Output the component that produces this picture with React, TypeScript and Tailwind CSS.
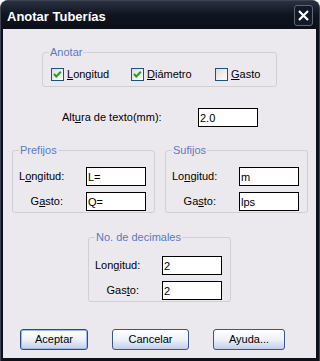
import type { ReactNode } from "react";

function Check({ checked }: { checked: boolean }) {
  return (
    <span className="w-[13px] h-[13px] border border-[#1c5180] bg-linear-to-br from-[#dcdcd7] to-white flex items-center justify-center shrink-0">
      {checked && (
        <svg width="11" height="11" viewBox="0 0 11 11">
          <path d="M2 5 L4.3 7.5 L8.8 2.8" fill="none" stroke="#21a121" strokeWidth="2" />
        </svg>
      )}
    </span>
  );
}

function Group({
  title,
  className = "",
  children,
}: {
  title: string;
  className?: string;
  children: ReactNode;
}) {
  return (
    <fieldset className={`border border-[#d0cfd4] rounded-[3px] pl-[6px] ${className}`}>
      <legend className="px-[1px] leading-[13px] text-[#5a78c4]">{title}</legend>
      {children}
    </fieldset>
  );
}

function Field({ label, value }: { label: ReactNode; value: string }) {
  return (
    <div className="flex items-center h-[19px]">
      <span className="w-[44px] text-right whitespace-nowrap">{label}</span>
      <input
        readOnly
        value={value}
        className="ml-[23px] w-[60px] h-[19px] border border-black bg-white px-[1px] text-[11px] outline-none"
      />
    </div>
  );
}

export default function App() {
  return (
    <div className="w-[320px] h-[361px] flex flex-col bg-[#0c111b] rounded-t-[8px] border-t border-x border-[#3c4352] font-['Liberation_Sans',Arial,sans-serif] text-[11px] text-black">
      {/* Title bar */}
      <div className="h-[28px] flex items-start justify-between pl-[6px] pr-[6px] rounded-t-[8px] bg-linear-to-b from-[#2a3141] via-[#0f1420] to-[#0b0f18]">
        <span className="mt-[8px] leading-[15px] text-[13px] font-bold text-white">Anotar Tuberías</span>
        <div className="mt-[4px] w-[19px] h-[21px] rounded-[3px] border border-[#5f6675] bg-[#131927] flex items-center justify-center">
          <svg width="11" height="11" viewBox="0 0 11 11">
            <path d="M1 1 L10 10 M10 1 L1 10" stroke="white" strokeWidth="2.2" />
          </svg>
        </div>
      </div>

      {/* Content */}
      <div className="flex-1 ml-[2px] mr-[3px] mb-[3px] bg-[#ece9ee] flex flex-col items-start">
        <Group title="Anotar" className="mt-[17px] ml-[39px] w-[235px] pt-[9px] pb-[5px]">
          <div className="flex items-center pl-[2px] h-[13px]">
            <div className="w-[80px] flex items-center gap-[3px]">
              <Check checked />
              <span>
                <u>L</u>ongitud
              </span>
            </div>
            <div className="w-[84px] flex items-center gap-[3px]">
              <Check checked />
              <span>
                <u>D</u>iámetro
              </span>
            </div>
            <div className="flex items-center gap-[3px]">
              <Check checked={false} />
              <span>
                <u>G</u>asto
              </span>
            </div>
          </div>
        </Group>

        <div className="mt-[21px] ml-[59px] flex items-center h-[19px]">
          <span className="w-[136px]">
            Alt<u>u</u>ra de texto(mm):
          </span>
          <input
            readOnly
            value="2.0"
            className="w-[60px] h-[19px] border border-black bg-white px-[1px] text-[11px] outline-none"
          />
        </div>

        <div className="mt-[17px] ml-[9px] flex gap-[10px]">
          <Group title="Prefijos" className="w-[143px] pt-[10px] pb-[1px]">
            <div className="flex flex-col gap-[6px]">
              <Field label={<>L<u>o</u>ngitud:</>} value="L=" />
              <Field label={<>G<u>a</u>sto:</>} value="Q=" />
            </div>
          </Group>
          <Group title="Sufijos" className="w-[143px] pt-[10px] pb-[1px]">
            <div className="flex flex-col gap-[6px]">
              <Field label={<>Lo<u>n</u>gitud:</>} value="m" />
              <Field label={<>Ga<u>s</u>to:</>} value="lps" />
            </div>
          </Group>
        </div>

        <Group title="No. de decimales" className="mt-[18px] ml-[85px] w-[143px] pt-[12px] pb-[1px]">
          <div className="flex flex-col gap-[6px]">
            <Field label={<>Lon<u>g</u>itud:</>} value="2" />
            <Field label={<>Gas<u>t</u>o:</>} value="2" />
          </div>
        </Group>

        <div className="mt-[27px] ml-[17px] flex gap-[24px]">
          <button className="h-[21px] w-[68px] rounded-[3px] border border-[#2c4d8a] bg-linear-to-b from-white via-[#eef1f8] to-[#c2cfe9] shadow-[inset_0_0_0_1px_#9fbaea]">
            Aceptar
          </button>
          <button className="h-[21px] w-[77px] rounded-[3px] border border-[#3b5687] bg-linear-to-b from-white via-[#eef1f8] to-[#c2cfe9]">
            Cancelar
          </button>
          <button className="h-[21px] w-[72px] rounded-[3px] border border-[#3b5687] bg-linear-to-b from-white via-[#eef1f8] to-[#c2cfe9]">
            Ayuda...
          </button>
        </div>
      </div>
    </div>
  );
}
